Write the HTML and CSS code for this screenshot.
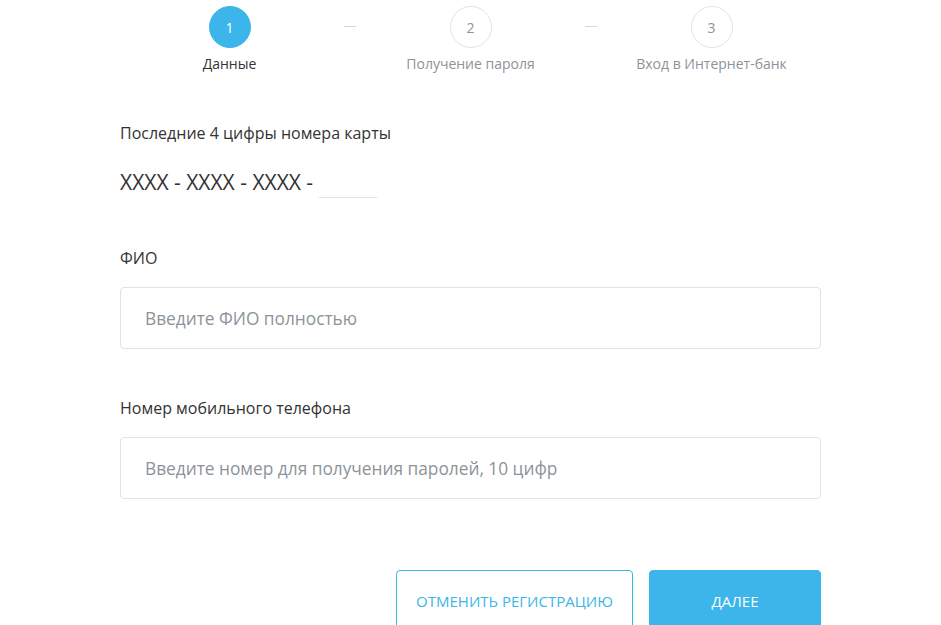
FILE: index.html
```html
<!DOCTYPE html>
<html lang="ru">
<head>
<meta charset="utf-8">
<title>Регистрация</title>
<link rel="stylesheet" href="styles.css">
</head>
<body>
<div class="steps">
  <div class="step active">
    <div class="circle">1</div>
    <div class="step-label">Данные</div>
  </div>
  <div class="dash"></div>
  <div class="step">
    <div class="circle">2</div>
    <div class="step-label">Получение пароля</div>
  </div>
  <div class="dash"></div>
  <div class="step">
    <div class="circle">3</div>
    <div class="step-label">Вход в Интернет-банк</div>
  </div>
</div>

<form class="form">
  <div class="field card-field">
    <label class="label">Последние 4 цифры номера карты</label>
    <div class="card-row">
      <span class="card-mask">XXXX - XXXX - XXXX -</span>
      <input class="card-input" type="text" maxlength="4">
    </div>
  </div>
  <div class="field">
    <label class="label">ФИО</label>
    <input class="text-input" type="text" placeholder="Введите ФИО полностью">
  </div>
  <div class="field">
    <label class="label">Номер мобильного телефона</label>
    <input class="text-input" type="text" placeholder="Введите номер для получения паролей, 10 цифр">
  </div>
  <div class="actions">
    <button type="button" class="btn btn-outline">ОТМЕНИТЬ РЕГИСТРАЦИЮ</button>
    <button type="button" class="btn btn-primary">ДАЛЕЕ</button>
  </div>
</form>
</body>
</html>
```

FILE: styles.css
```css
* { box-sizing: border-box; }
html, body { margin: 0; padding: 0; background: #fff; }
body {
  font-family: "Open Sans", "Noto Sans", sans-serif;
  color: #333;
  overflow: hidden;
}
.steps {
  display: flex;
  justify-content: center;
  align-items: flex-start;
  padding-top: 6px;
}
.step {
  width: 200px;
  display: flex;
  flex-direction: column;
  align-items: center;
}
.circle {
  width: 42px;
  height: 42px;
  border-radius: 50%;
  border: 1px solid #dfe3e8;
  display: flex;
  align-items: center;
  justify-content: center;
  font-size: 14px;
  color: #8c939a;
}
.step.active .circle {
  background: #3bb5ea;
  border-color: #3bb5ea;
  color: #fff;
}
.step-label {
  margin-top: 6px;
  font-size: 14px;
  line-height: 20px;
  color: #8c939a;
}
.step.active .step-label { color: #333; }
.dash {
  width: 41px;
  display: flex;
  justify-content: center;
  padding-top: 20px;
}
.dash::before {
  content: "";
  width: 12px;
  height: 1px;
  background: #d3d8dd;
}
.form {
  width: 701px;
  margin: 0 0 0 120px;
  padding-top: 48px;
}
.label {
  display: block;
  font-size: 16px;
  line-height: 22px;
  color: #333;
}
.card-row {
  display: flex;
  align-items: flex-start;
  margin-top: 24px;
  height: 30px;
}
.card-mask {
  font-size: 21px;
  line-height: 28px;
  color: #333;
}
.card-input {
  width: 58px;
  height: 30px;
  margin-left: 6px;
  padding: 0;
  border: 0;
  border-bottom: 1px solid #dfe3e8;
  outline: none;
  font: inherit;
  font-size: 21px;
  background: transparent;
}
.field + .field { margin-top: 48px; }
.card-field + .field { margin-top: 49px; }
.text-input {
  display: block;
  width: 100%;
  height: 62px;
  margin-top: 18px;
  border: 1px solid #dde3ea;
  border-radius: 4px;
  padding: 0 24px;
  font-family: inherit;
  font-size: 17.3px;
  color: #333;
  outline: none;
}
.text-input::placeholder { color: #8c939a; }
.actions {
  display: flex;
  justify-content: flex-end;
  gap: 16px;
  margin-top: 71px;
}
.btn {
  height: 62px;
  border-radius: 4px;
  font-family: inherit;
  font-size: 15px;
  cursor: pointer;
}
.btn-outline {
  width: 237px;
  background: #fff;
  border: 1px solid #3bb5ea;
  color: #3bb5ea;
}
.btn-primary {
  width: 172px;
  background: #3bb5ea;
  border: 1px solid #3bb5ea;
  color: #fff;
}
```
